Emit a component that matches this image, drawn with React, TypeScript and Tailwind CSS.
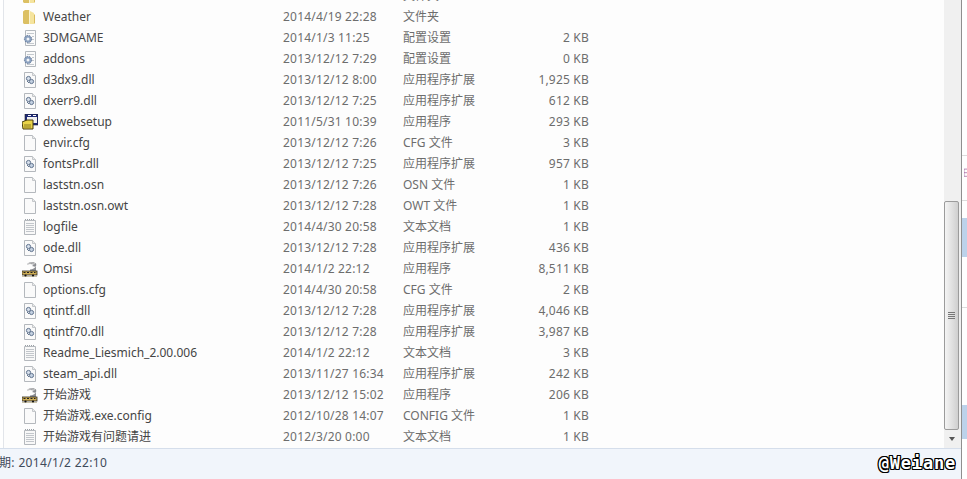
const rows: [string, string, string, string, string][] = [
  ["folder", "", "2014/4/19 22:28", "文件夹", ""],
  ["folder", "Weather", "2014/4/19 22:28", "文件夹", ""],
  ["cfg", "3DMGAME", "2014/1/3 11:25", "配置设置", "2 KB"],
  ["cfg", "addons", "2013/12/12 7:29", "配置设置", "0 KB"],
  ["dll", "d3dx9.dll", "2013/12/12 8:00", "应用程序扩展", "1,925 KB"],
  ["dll", "dxerr9.dll", "2013/12/12 7:25", "应用程序扩展", "612 KB"],
  ["setup", "dxwebsetup", "2011/5/31 10:39", "应用程序", "293 KB"],
  ["blank", "envir.cfg", "2013/12/12 7:26", "CFG 文件", "3 KB"],
  ["dll", "fontsPr.dll", "2013/12/12 7:25", "应用程序扩展", "957 KB"],
  ["blank", "laststn.osn", "2013/12/12 7:26", "OSN 文件", "1 KB"],
  ["blank", "laststn.osn.owt", "2013/12/12 7:28", "OWT 文件", "1 KB"],
  ["txt", "logfile", "2014/4/30 20:58", "文本文档", "1 KB"],
  ["dll", "ode.dll", "2013/12/12 7:28", "应用程序扩展", "436 KB"],
  ["bus", "Omsi", "2014/1/2 22:12", "应用程序", "8,511 KB"],
  ["blank", "options.cfg", "2014/4/30 20:58", "CFG 文件", "2 KB"],
  ["dll", "qtintf.dll", "2013/12/12 7:28", "应用程序扩展", "4,046 KB"],
  ["dll", "qtintf70.dll", "2013/12/12 7:28", "应用程序扩展", "3,987 KB"],
  ["txt", "Readme_Liesmich_2.00.006", "2014/1/2 22:12", "文本文档", "3 KB"],
  ["dll", "steam_api.dll", "2013/11/27 16:34", "应用程序扩展", "242 KB"],
  ["bus", "开始游戏", "2013/12/12 15:02", "应用程序", "206 KB"],
  ["blank", "开始游戏.exe.config", "2012/10/28 14:07", "CONFIG 文件", "1 KB"],
  ["txt", "开始游戏有问题请进", "2012/3/20 0:00", "文本文档", "1 KB"],
];

function Page({ children }: { children?: React.ReactNode }) {
  return (
    <svg width="16" height="16" viewBox="0 0 16 16" className="shrink-0">
      <path d="M2.500 .5H10.500L13.500 3.500V15.500H2.500Z" fill="#fafafa" stroke="#b4b8bd" />
      <path d="M10.500 .5V3.500H13.500" fill="#e8e9ea" stroke="#c4c7ca" />
      {children}
    </svg>
  );
}

function Icon({ kind }: { kind: string }) {
  if (kind === "folder")
    return (
      <svg width="16" height="16" viewBox="0 0 16 16" className="shrink-0">
        <path d="M1 2.500L3 1H7L8 3V15H2L1 14Z" fill="#dcc063" />
        <path d="M8 2L12 4V15H8Z" fill="#f5e49e" />
        <path d="M12 5L13 6V14L12 15Z" fill="#d9bb5c" />
        <path d="M7.500 1.500V15" stroke="#fbf3cf" />
      </svg>
    );
  if (kind === "blank") return <Page />;
  if (kind === "txt")
    return (
      <svg width="16" height="16" viewBox="0 0 16 16" className="shrink-0">
        <path d="M2.500 1.500H13.500V15.500H2.500Z" fill="#f8f8f8" stroke="#b4b8bd" />
        <path d="M4 4.500H12M4 6.500H12M4 8.500H12M4 10.500H12M4 12.500H12" stroke="#c2c6cb" />
        <path d="M3 .5H13" stroke="#9aa0a6" strokeDasharray="1 1" />
      </svg>
    );
  if (kind === "cfg")
    return (
      <svg width="16" height="16" viewBox="0 0 16 16" className="shrink-0">
        <path d="M3.500 .5H13.500V15.500H3.500Z" fill="#fbfbfb" stroke="#b4b9be" />
        <path d="M5 3.500H12M10 6.500H12M10 9.500H12M5 13.500H12" stroke="#c4c9ce" />
        <circle cx="6" cy="9" r="3.600" fill="#8ba1bf" stroke="#64799a" strokeDasharray="1.500 1" />
        <circle cx="6" cy="9" r="1.500" fill="#f2f5f9" />
      </svg>
    );
  if (kind === "dll")
    return (
      <Page>
        <circle cx="6.500" cy="6.500" r="2.100" fill="#d5deea" stroke="#62758f" />
        <circle cx="9.500" cy="9.500" r="2.100" fill="#c2cfe0" stroke="#62758f" />
        <path d="M5 9L7 11" stroke="#62758f" />
      </Page>
    );
  if (kind === "setup")
    return (
      <svg width="16" height="16" viewBox="0 0 16 16" className="shrink-0">
        <rect x="3" y="0" width="13" height="11" fill="#1e2a78" stroke="#222" strokeWidth=".6" />
        <rect x="5" y="3" width="10" height="6" fill="#f2f2f2" />
        <path d="M6 1.500H9M11 1.500H14" stroke="#fff" />
        <path d="M0 8L5 6H11V15H1Z" fill="#e9d44a" stroke="#4a3f10" />
        <path d="M2 11H9M2 13H9" stroke="#8a7a20" />
      </svg>
    );
  return (
    <svg width="16" height="16" viewBox="0 0 16 16" className="shrink-0">
      <path d="M5 3.500C6 .5 12 0 14 2.500C15 5 13 8 8 8.500V10H14V6L10 5L12 3.500L8 3Z" fill="#8c8e92" />
      <path d="M6 3C8 1.500 11 1.500 13 3" fill="none" stroke="#d8d8d8" />
      <rect x="0" y="10" width="15" height="4" fill="#cfae55" stroke="#2d2a20" strokeWidth=".8" />
      <path d="M1.500 11.500H3.500M5 11.500H7M8.500 11.500H10.500M12 11.500H13.500" stroke="#222" />
      <path d="M0 15.500H15" stroke="#c9c2a8" />
      <circle cx="3.500" cy="14.500" r="1.100" fill="#111" />
      <circle cx="11" cy="14.500" r="1.100" fill="#111" />
    </svg>
  );
}

export default function App() {
  return (
    <div className="flex h-[479px] w-[967px] overflow-hidden bg-white font-['Noto_Sans','Noto_Sans_CJK_SC',sans-serif] text-[12px] text-[#454545]">
      <div className="flex w-[961px] shrink-0 flex-col">
        <div className="flex min-h-0 flex-1 bg-[#fdfdfd]">
          <div className="w-[4px] shrink-0 border-r border-[#e2e5ea] bg-white" />
          <div className="min-w-0 flex-1 overflow-hidden">
            <div className="-mt-[15px]">
              {rows.map(([icon, name, date, type, size], i) => (
                <div key={i} className="flex h-[21px] items-center leading-[21px]">
                  <div className="flex w-[279px] shrink-0 items-center gap-[5px] pl-[18px]">
                    <Icon kind={icon} />
                    <span className="whitespace-nowrap">{name}</span>
                  </div>
                  <span className="w-[120px] shrink-0 whitespace-nowrap tracking-[0.2px] text-[#6d6d6d]">{date}</span>
                  <span className="w-[110px] shrink-0 whitespace-nowrap text-[#6d6d6d]">{type}</span>
                  <span className="w-[76px] shrink-0 whitespace-nowrap text-right tracking-[0.2px] text-[#6d6d6d]">{size}</span>
                </div>
              ))}
            </div>
          </div>
          <div className="flex w-[17px] shrink-0 flex-col bg-[#f0f0f0]">
            <div className="h-[201px] shrink-0" />
            <div className="flex h-[229px] w-[15px] shrink-0 items-center justify-center rounded-[2px] border border-[#9b9b9b] bg-gradient-to-r from-[#f4f4f4] to-[#cfcfcf]">
              <div className="flex flex-col gap-[1px]">
                <div className="h-[1px] w-[7px] bg-[#777]" />
                <div className="h-[1px] w-[7px] bg-[#777]" />
                <div className="h-[1px] w-[7px] bg-[#777]" />
                <div className="h-[1px] w-[7px] bg-[#777]" />
              </div>
            </div>
            <div className="flex flex-1 items-center justify-center pr-[2px]">
              <div className="h-0 w-0 border-x-[3px] border-t-[4px] border-x-transparent border-t-[#555]" />
            </div>
          </div>
        </div>
        <div className="flex h-[31px] shrink-0 items-start justify-between border-t border-[#d5deeb] bg-[#f1f5fb] pr-[5px] pt-[5px] text-[#3f4a5a]">
          <span className="-ml-[1px] whitespace-nowrap tracking-[0.35px]">期: 2014/1/2 22:10</span>
          <span className="font-['DejaVu_Sans_Mono',monospace] text-[17px] font-bold leading-[18px] tracking-[0.8px] text-white [text-shadow:1px_0_0_#000,-1px_0_0_#000,0_1px_0_#000,0_-1px_0_#000,1px_1px_0_#000,-1px_-1px_0_#000,1px_-1px_0_#000,-1px_1px_0_#000]">@Weiane</span>
        </div>
      </div>
      <div className="flex w-[6px] shrink-0 flex-col border-l border-[#8f8f8f] bg-white">
        <div className="h-[156px] border-b border-[#dcdcdc]" />
        <div className="flex h-[45px] items-center border-b border-[#dcdcdc]">
          <svg width="5" height="14" viewBox="0 0 5 14" className="-mt-[10px] ml-[2px]">
            <path d="M0 .5H5M0 6.500H5M0 12.500H5M0 .5V12.500" fill="none" stroke="#8b3f86" />
          </svg>
        </div>
        <div className="h-[17px]" />
        <div className="h-[39px] bg-[#bcd2ea]" />
        <div className="h-[51px] border-b border-[#dcdcdc]" />
        <div className="h-[97px]" />
        <div className="h-[34px] bg-[#bcd2ea]" />
      </div>
    </div>
  );
}
